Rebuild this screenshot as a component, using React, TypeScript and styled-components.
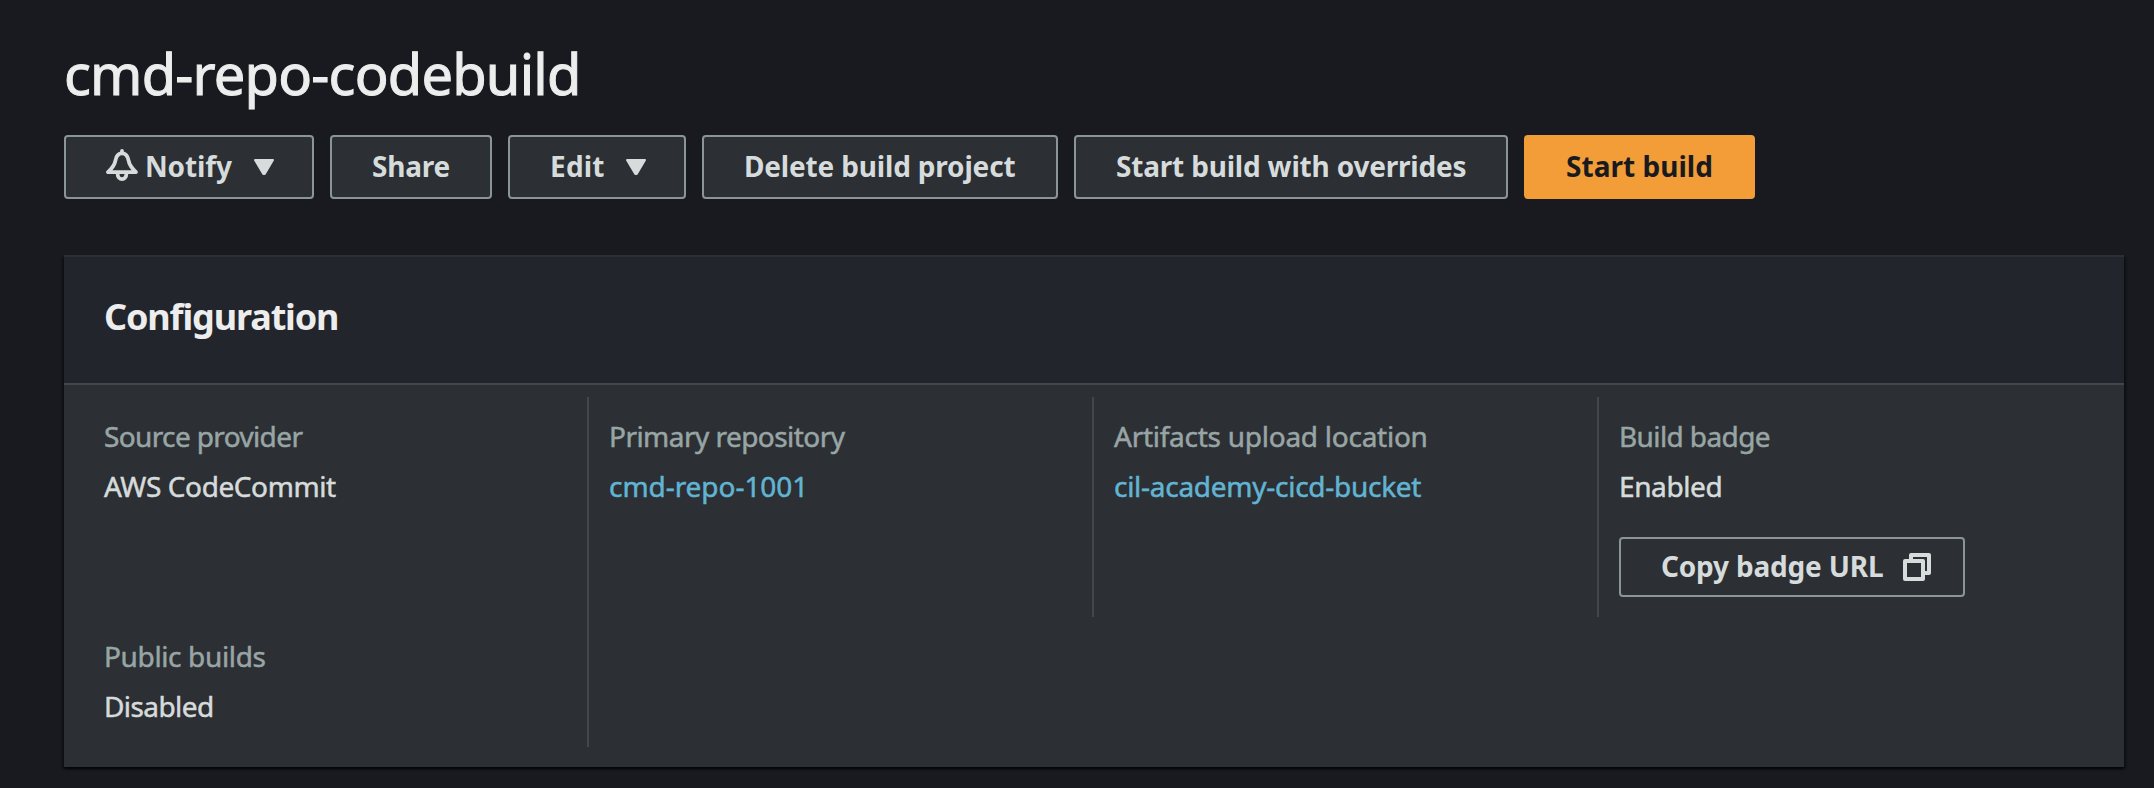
import React from 'react';
import styled, { createGlobalStyle, css } from 'styled-components';

const GlobalStyle = createGlobalStyle`
  * { box-sizing: border-box; }
  body {
    margin: 0;
    background: #191a1f;
    color: #d6dbdb;
    font-family: "Noto Sans", "Open Sans", sans-serif;
    font-size: 28px;
  }
`;

const Page = styled.main`
  min-height: 788px;
  padding: 39px 30px 0 64px;
`;

const Title = styled.h1`
  margin: 0 0 28px;
  color: #ecedec;
  font-size: 56px;
  font-weight: 400;
  line-height: 68px;
  letter-spacing: -0.79px;
  -webkit-text-stroke: 1px currentColor;
`;

const Toolbar = styled.div`
  display: flex;
  gap: 16px;
`;

const Button = styled.button<{ $width: number; $primary?: boolean; $compact?: boolean }>`
  display: flex;
  align-items: center;
  width: ${p => p.$width}px;
  height: ${p => (p.$compact ? 60 : 64)}px;
  padding: 0 ${p => (p.$compact ? 32 : 38)}px 0 40px;
  border: 2px solid #8a9696;
  border-radius: 4px;
  background: #2c2f33;
  color: #d6dbdb;
  font: inherit;
  font-weight: 700;
  ${p =>
    p.$primary &&
    css`
      border-color: #f29d38;
      background: #f29d38;
      color: #191a1f;
    `}
`;

const ButtonText = styled.span<{ $tracking: number }>`
  padding-bottom: 2px;
  letter-spacing: ${p => p.$tracking}px;
  line-height: 40px;
  white-space: nowrap;
`;

const BellSvg = styled.svg`
  flex: none;
  width: 32px;
  height: 32px;
  margin: 0 7px 4px 0;
`;

const TrailingSvg = styled.svg`
  flex: none;
  margin-left: auto;
`;

const Card = styled.section`
  margin-top: 56px;
  border-top: 2px solid #2c2f33;
  background: #2c2f33;
  box-shadow:
    0 2px 2px rgba(0, 0, 0, 0.5),
    2px 2px 2px rgba(0, 0, 0, 0.3),
    -2px 2px 2px rgba(0, 0, 0, 0.3);
`;

const CardHeader = styled.header`
  display: flex;
  align-items: center;
  height: 128px;
  padding: 0 40px 7px;
  border-bottom: 2px solid #43464e;
  background: #22252c;
`;

const CardTitle = styled.h2`
  margin: 0;
  color: #ecedec;
  font-size: 36px;
  font-weight: 700;
  line-height: 44px;
  letter-spacing: -1.13px;
`;

const Details = styled.div`
  display: grid;
  grid-template-columns: 525px 505px 505px 525px;
  grid-template-rows: 220px 130px;
  padding: 12px 0 20px;
`;

const Cell = styled.div<{ $first?: boolean; $last?: boolean }>`
  padding: 21px 20px 0 ${p => (p.$first ? 40 : 20)}px;
  border-right: ${p => (p.$last ? 'none' : '2px solid #43464e')};
`;

const Label = styled.div<{ $tracking: number }>`
  margin-bottom: 14px;
  color: #98a5a5;
  line-height: 36px;
  letter-spacing: ${p => p.$tracking}px;
  -webkit-text-stroke: 0.5px currentColor;
`;

const Value = styled.div<{ $tracking: number }>`
  line-height: 36px;
  letter-spacing: ${p => p.$tracking}px;
  -webkit-text-stroke: 0.5px currentColor;
`;

const LinkValue = styled(Value).attrs({ as: 'a' })`
  display: block;
  color: #62b4d3;
  text-decoration: none;
`;

const BadgeAction = styled.div`
  margin-top: 33px;
`;

const Bell = () => (
  <BellSvg viewBox="0 0 32 32" fill="none" stroke="currentColor" strokeWidth="3.8" strokeLinejoin="round" strokeLinecap="round">
    <path d="M16 1.9V3.6" />
    <path d="M16 4.4c-4 0-5.900 3-6.600 7.200C8.600 16.600 6 19.400 2 23.100h28c-4-3.700-6.600-6.500-7.400-11.500C21.900 7.400 20 4.400 16 4.400z" />
    <path d="M11.700 25.500a4.300 4.600 0 0 0 8.600 0" />
  </BellSvg>
);

const Caret = () => (
  <TrailingSvg width="20" height="16" viewBox="0 0 20 16" fill="currentColor" stroke="currentColor" strokeWidth="2" strokeLinejoin="round">
    <path d="M1 1h18l-8.300 14h-1.400z" />
  </TrailingSvg>
);

const CopyIcon = () => (
  <TrailingSvg width="28" height="28" viewBox="0 0 28 28" fill="none" stroke="currentColor" strokeWidth="4" strokeLinejoin="round">
    <path d="M2 8h18v18H2z" />
    <path d="M8 6V2h18v18h-4" />
  </TrailingSvg>
);

export default function App() {
  return (
    <>
      <GlobalStyle />
      <Page>
        <Title>cmd-repo-codebuild</Title>
        <Toolbar>
          <Button $width={250}>
            <Bell />
            <ButtonText $tracking={-0.14}>Notify</ButtonText>
            <Caret />
          </Button>
          <Button $width={162}>
            <ButtonText $tracking={-0.2}>Share</ButtonText>
          </Button>
          <Button $width={178}>
            <ButtonText $tracking={0.2}>Edit</ButtonText>
            <Caret />
          </Button>
          <Button $width={356}>
            <ButtonText $tracking={-0.17}>Delete build project</ButtonText>
          </Button>
          <Button $width={434}>
            <ButtonText $tracking={-0.19}>Start build with overrides</ButtonText>
          </Button>
          <Button $width={231} $primary>
            <ButtonText $tracking={0.03}>Start build</ButtonText>
          </Button>
        </Toolbar>

        <Card>
          <CardHeader>
            <CardTitle>Configuration</CardTitle>
          </CardHeader>
          <Details>
            <Cell $first>
              <Label $tracking={-0.63}>Source provider</Label>
              <Value $tracking={-0.41}>AWS CodeCommit</Value>
            </Cell>
            <Cell>
              <Label $tracking={-0.54}>Primary repository</Label>
              <LinkValue $tracking={-0.05}>cmd-repo-1001</LinkValue>
            </Cell>
            <Cell>
              <Label $tracking={-0.26}>Artifacts upload location</Label>
              <LinkValue $tracking={-0.27}>cil-academy-cicd-bucket</LinkValue>
            </Cell>
            <Cell $last>
              <Label $tracking={-0.6}>Build badge</Label>
              <Value $tracking={-0.4}>Enabled</Value>
              <BadgeAction>
                <Button $width={346} $compact>
                  <ButtonText $tracking={-0.18}>Copy badge URL</ButtonText>
                  <CopyIcon />
                </Button>
              </BadgeAction>
            </Cell>
            <Cell $first>
              <Label $tracking={-0.36}>Public builds</Label>
              <Value $tracking={-0.58}>Disabled</Value>
            </Cell>
          </Details>
        </Card>
      </Page>
    </>
  );
}
